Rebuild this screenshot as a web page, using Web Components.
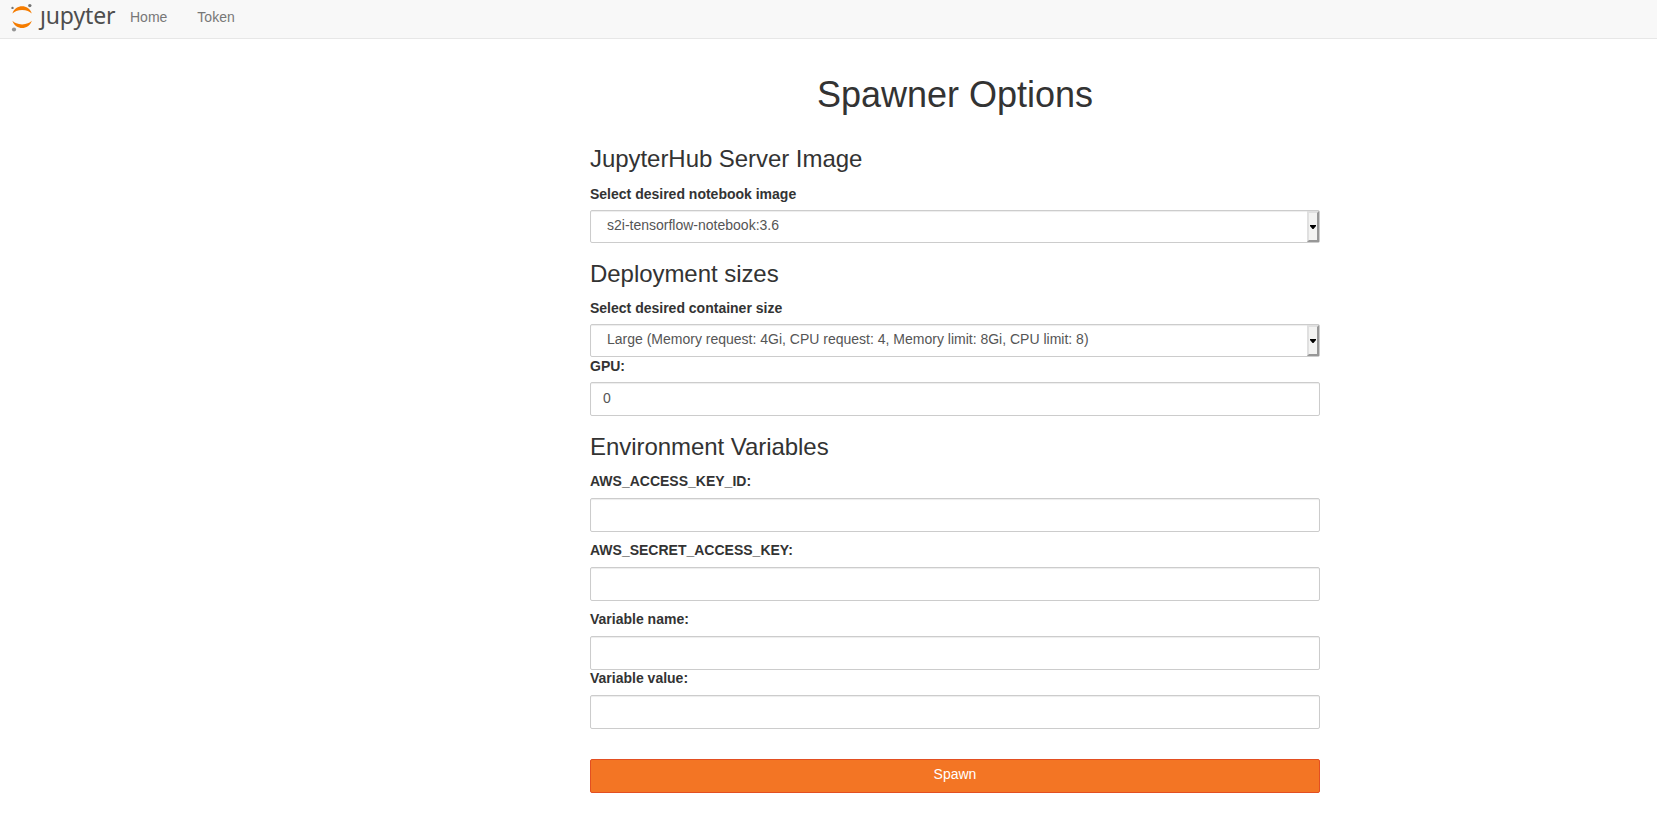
<!DOCTYPE html>
<html lang="en"><head><meta charset="utf-8"><title>JupyterHub</title>
<style>
html,body{margin:0;background:#fff}
body{font:14px/20px "Liberation Sans",Arial,sans-serif;color:#333}
</style></head><body>
<hub-page></hub-page>
<script>
const define=(name,html,init)=>{
  const t=document.createElement('template');t.innerHTML=html;
  customElements.define(name,class extends HTMLElement{
    constructor(){super();this.attachShadow({mode:'open'}).append(t.content.cloneNode(true));}
    connectedCallback(){if(init)init(this,this.shadowRoot);}
  });
};
define('hub-logo',`<style>
:host{display:flex;width:105px;height:38px;color:#4e4e4e}
svg{display:block;width:30px;height:38px;flex:none}
.w{font:23px/30px "Noto Sans",sans-serif;letter-spacing:-.15px;white-space:nowrap}
.j{display:inline-block;clip-path:inset(10px -4px -4px -4px)}
</style>
<svg viewBox="10 0 30 38"><path fill="#f57c00" d="M12.4 13.6C14 8.600 18 6.300 22.100 6.300S30.200 8.600 31.800 13.600C29.800 11.500 26.500 10 22.100 10S14.400 11.500 12.400 13.600Z"/><path fill="#f57c00" d="M12.400 20.800C14 25.800 18 28.100 22.100 28.100S30.200 25.800 31.800 20.800C29.800 22.900 26.500 24.400 22.100 24.400S14.400 22.900 12.400 20.800Z"/><g fill="#757575"><circle cx="29.800" cy="5.600" r="1.700"/><circle cx="12.500" cy="7.900" r="1.200"/><circle cx="14" cy="29.500" r="2.100" fill="#949494"/></g></svg>
<span class="w"><span class="j">j</span>upyter</span>`);
define('nav-link',`<style>:host{display:block;font-size:14px;line-height:20px;padding:7px 15px 0;color:#777;white-space:nowrap}</style><slot></slot>`);
define('hub-navbar',`<style>
:host{display:flex;height:38px;background:#f8f8f8;border-bottom:1px solid #e7e7e7;padding-left:10px}
</style><hub-logo></hub-logo><nav-link>Home</nav-link><nav-link>Token</nav-link>`);
define('form-title',`<style>:host{display:block;text-align:center;font-size:36px;line-height:40px;height:40px}</style><slot></slot>`);
define('form-section',`<style>
:host{display:block}
h3{margin:0;font-weight:400;font-size:24px;line-height:26px;letter-spacing:-.05px;height:var(--heading-height,37px)}
</style><h3></h3><slot></slot>`,(e,r)=>{r.querySelector('h3').textContent=e.getAttribute('heading')});
define('form-field',`<style>
:host{display:block}
label{display:block;font-weight:700;line-height:20px;height:var(--label-height,26px)}
</style><label></label><slot></slot>`,(e,r)=>{r.querySelector('label').textContent=e.getAttribute('label')});
define('text-box',`<style>
:host{display:block;box-sizing:border-box;height:34px;border:1px solid #ccc;border-radius:2px;box-shadow:inset 0 1px 1px rgba(0,0,0,.075);padding:5px 12px;color:#555}
</style><slot></slot>`);
define('select-box',`<style>
:host{display:flex;box-sizing:border-box;height:33px;border:1px solid #ccc;border-radius:2px;box-shadow:inset 0 1px 1px rgba(0,0,0,.075);color:#555}
.v{flex:1;padding:4px 16px}
.b{box-sizing:border-box;width:12px;height:31px;border:2px solid;border-color:#e0e0e0 #979797 #979797 #e0e0e0;background:#f3f3f2;display:flex;align-items:center;justify-content:center}
svg{display:block;flex:none}
</style><div class="v"><slot></slot></div><div class="b"><svg width="6" height="4" viewBox="0 0 6 4"><path d="M0 0H6V1L3.500 4H2.500L0 1Z"/></svg></div>`);
define('spawn-button',`<style>
:host{display:block;box-sizing:border-box;height:34px;border:1px solid #e34f21;border-radius:2px;background:#f37524;color:#fff;text-align:center;padding-top:4px}
</style><slot></slot>`);
define('hub-page',`<style>
:host{display:block}
main{width:730px;margin-left:590px;padding-top:36px}
form-title{margin-bottom:31px}
.s1{--heading-height:38px}
.s2,.s3{margin-top:18px}
.s3{--label-height:27px}
.gap{margin-top:8px}
.gpu{margin-top:-1px}
.value{margin-top:-2px}
spawn-button{margin-top:30px}
</style>
<hub-navbar></hub-navbar>
<main>
<form-title>Spawner Options</form-title>
<form-section class="s1" heading="JupyterHub Server Image"><form-field label="Select desired notebook image"><select-box>s2i-tensorflow-notebook:3.6</select-box></form-field></form-section>
<form-section class="s2" heading="Deployment sizes"><form-field label="Select desired container size"><select-box>Large (Memory request: 4Gi, CPU request: 4, Memory limit: 8Gi, CPU limit: 8)</select-box></form-field><form-field class="gpu" label="GPU:"><text-box>0</text-box></form-field></form-section>
<form-section class="s3" heading="Environment Variables"><form-field label="AWS_ACCESS_KEY_ID:"><text-box></text-box></form-field><form-field class="gap" label="AWS_SECRET_ACCESS_KEY:"><text-box></text-box></form-field><form-field class="gap" label="Variable name:"><text-box></text-box></form-field><form-field class="value" label="Variable value:"><text-box></text-box></form-field></form-section>
<spawn-button>Spawn</spawn-button>
</main>`);
</script></body></html>
